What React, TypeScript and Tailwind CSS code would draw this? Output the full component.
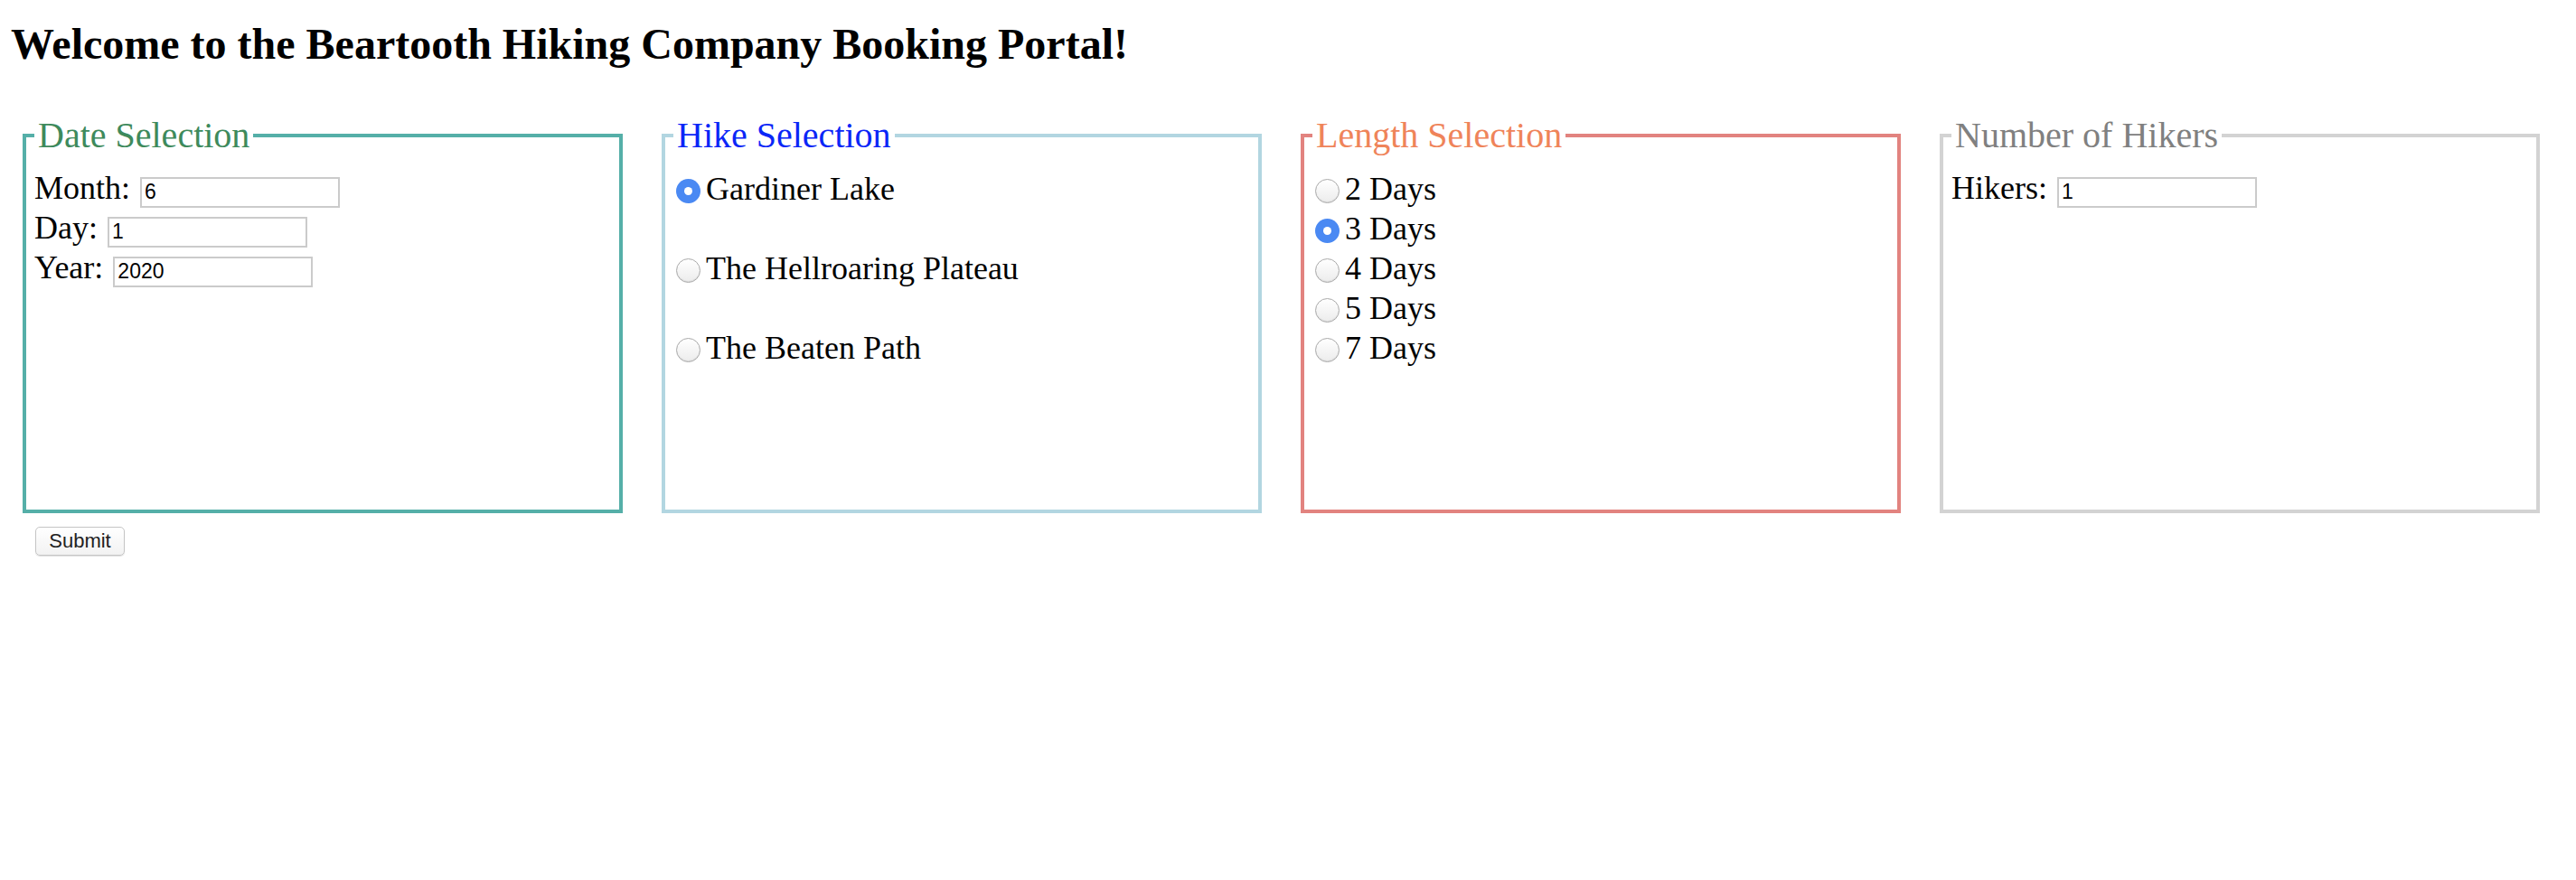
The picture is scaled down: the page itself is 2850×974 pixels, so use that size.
import { useState } from "react";

const HIKES = ["Gardiner Lake", "The Hellroaring Plateau", "The Beaten Path"];
const LENGTHS = ["2 Days", "3 Days", "4 Days", "5 Days", "7 Days"];

function Radio({ checked }: { checked: boolean }) {
  if (checked) {
    return (
      <span className="ml-[3px] mr-[6px] mt-[4px] flex size-[27px] shrink-0 items-center justify-center rounded-full bg-[#4a89f3]">
        <span className="size-[9px] rounded-full bg-white" />
      </span>
    );
  }
  return (
    <span className="ml-[3px] mr-[6px] mt-[4px] size-[27px] shrink-0 rounded-full border border-[#a9a9a9] bg-gradient-to-b from-white to-[#ececec] shadow-[inset_0_-1px_1px_rgba(0,0,0,0.08)]" />
  );
}

function TextBox({ value }: { value: string }) {
  return (
    <input
      type="text"
      defaultValue={value}
      className="h-[34px] w-[221px] border-2 border-[#cbcbcb] bg-white px-[3px] font-['Liberation_Sans',Arial,sans-serif] text-[23px] text-black outline-none"
    />
  );
}

export default function App() {
  const [hike, setHike] = useState("Gardiner Lake");
  const [length, setLength] = useState("3 Days");

  return (
    <div className="min-h-screen bg-white px-[12px] font-['Liberation_Serif','Times_New_Roman',serif] leading-[normal] text-black">
      <h1 className="pt-[21px] text-[48px] font-bold leading-[55px]">
        Welcome to the Beartooth Hiking Company Booking Portal!
      </h1>

      <form className="mt-[50px]" onSubmit={(e) => e.preventDefault()}>
        <div className="flex gap-[43px] pl-[13px]">
          {/* Date */}
          <fieldset className="h-[442px] w-[664px] shrink-0 border-4 border-[#55afa8] px-[9px] pt-[14px]">
            <legend className="px-[4px] text-[40px] text-[#3e8a5c]">Date Selection</legend>
            <div className="flex h-[44px] items-baseline gap-[11px] text-[36px]">
              <span>Month:</span>
              <TextBox value="6" />
            </div>
            <div className="flex h-[44px] items-baseline gap-[11px] text-[36px]">
              <span>Day:</span>
              <TextBox value="1" />
            </div>
            <div className="flex h-[44px] items-baseline gap-[11px] text-[36px]">
              <span>Year:</span>
              <TextBox value="2020" />
            </div>
          </fieldset>

          {/* Hike */}
          <fieldset className="h-[442px] w-[664px] shrink-0 border-4 border-[#b2d6e1] px-[9px] pt-[14px]">
            <legend className="px-[4px] text-[40px] text-[#0b26f7]">Hike Selection</legend>
            <div className="flex flex-col gap-[44px]">
              {HIKES.map((h) => (
                <label
                  key={h}
                  onClick={() => setHike(h)}
                  className="flex h-[44px] cursor-pointer items-center text-[36px]"
                >
                  <Radio checked={hike === h} />
                  <span>{h}</span>
                </label>
              ))}
            </div>
          </fieldset>

          {/* Length */}
          <fieldset className="h-[442px] w-[664px] shrink-0 border-4 border-[#e2837f] px-[9px] pt-[14px]">
            <legend className="px-[4px] text-[40px] text-[#ef845a]">Length Selection</legend>
            <div className="flex flex-col">
              {LENGTHS.map((l) => (
                <label
                  key={l}
                  onClick={() => setLength(l)}
                  className="flex h-[44px] cursor-pointer items-center text-[36px]"
                >
                  <Radio checked={length === l} />
                  <span>{l}</span>
                </label>
              ))}
            </div>
          </fieldset>

          {/* Hikers */}
          <fieldset className="h-[442px] w-[664px] shrink-0 border-4 border-[#d3d3d3] px-[9px] pt-[14px]">
            <legend className="px-[4px] text-[40px] text-[#808080]">Number of Hikers</legend>
            <div className="flex h-[44px] items-baseline gap-[11px] text-[36px]">
              <span>Hikers:</span>
              <TextBox value="1" />
            </div>
          </fieldset>
        </div>

        <div className="ml-[27px] mt-[15px]">
          <button
            type="submit"
            className="h-[32px] w-[99px] rounded-[5px] border border-[#c5c5c5] bg-gradient-to-b from-white to-[#f2f2f2] font-['Liberation_Sans',Arial,sans-serif] text-[22px] text-[#222] shadow-[0_1px_1px_rgba(0,0,0,0.12)]"
          >
            Submit
          </button>
        </div>
      </form>
    </div>
  );
}
